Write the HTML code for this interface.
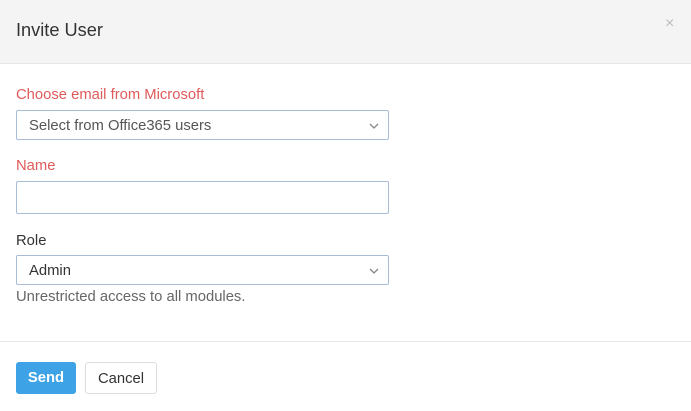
<!DOCTYPE html>
<html><head><style>
body{margin:0;width:691px;height:411px;background:#fff;font-family:"Liberation Sans",sans-serif;position:relative;overflow:hidden;color:#333}
.hd{position:absolute;left:0;top:0;width:691px;height:63px;background:#f4f4f4;border-bottom:1px solid #e6e6e6}
.t{position:absolute;left:16px;top:20px;font-size:18.2px;color:#333}
.x{position:absolute;left:665px;top:15px;font-size:16px;color:#bbb}
.lb{position:absolute;left:16px;font-size:14.8px}
.red{color:#e05a5a}
.bx{position:absolute;left:16px;width:373px;border:1px solid #a9bcd6;border-radius:2px;box-sizing:border-box}
.bx span{position:absolute;left:12px;top:7px;font-size:14.8px}
.bx svg{position:absolute;right:9px;top:12px}
.div{position:absolute;left:0;top:341px;width:691px;height:1px;background:#e6e6e6}
.btn{position:absolute;top:362px;height:32px;border-radius:3px;box-sizing:border-box;font-size:14.8px;text-align:center;line-height:33px}
</style></head><body>
<div class="hd"><div class="t">Invite User</div><div class="x">×</div></div>
<div class="lb red" style="top:87px">Choose email from Microsoft</div>
<div class="bx" style="top:110px;height:30px"><span style="color:#555">Select from Office365 users</span><svg width="10" height="6"><path d="M1 1l4 4 4-4" fill="none" stroke="#888" stroke-width="1.3"/></svg></div>
<div class="lb red" style="top:158px">Name</div>
<div class="bx" style="top:181px;height:33px"></div>
<div class="lb" style="top:233px">Role</div>
<div class="bx" style="top:255px;height:30px"><span>Admin</span><svg width="10" height="6"><path d="M1 1l4 4 4-4" fill="none" stroke="#888" stroke-width="1.3"/></svg></div>
<div class="lb" style="top:289px;color:#666">Unrestricted access to all modules.</div>
<div class="div"></div>
<div class="btn" style="left:16px;width:60px;background:#3ea3e6;color:#fff;font-weight:bold">Send</div>
<div class="btn" style="left:85px;width:72px;border:1px solid #ddd;color:#333">Cancel</div>
</body></html>
